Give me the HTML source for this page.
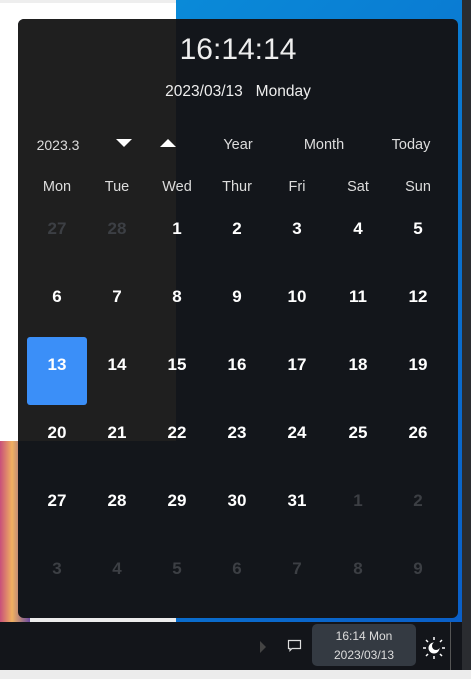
<!DOCTYPE html>
<html><head><meta charset="utf-8"><style>
body{margin:0;width:471px;height:679px;overflow:hidden;position:relative;background:#ececec;font-family:"Liberation Sans","DejaVu Sans",sans-serif}
.a{position:absolute}
.panel{left:18px;top:19px;width:440px;height:599px;border-radius:6px;overflow:hidden;background:#13161b}
.t{position:absolute;color:#fff;text-align:center;transform:translate(-50%,-50%);white-space:nowrap}
.d{font-weight:bold;font-size:17px}
.g{color:#3c3f44}
</style></head><body>
<div class="a" style="left:0;top:0;width:176px;height:441px;background:#fff"></div>
<div class="a" style="left:0;top:0;width:176px;height:3px;background:#eee"></div>
<div class="a" style="left:0;top:441px;width:30px;height:181px;background:linear-gradient(90deg,#c8507a,#f0b060 40%,#6a4aa0)"></div>
<div class="a" style="left:176px;top:0;width:286px;height:622px;background:linear-gradient(135deg,#0a8ad8,#0a5fc8)"></div>
<div class="a" style="left:462px;top:0;width:9px;height:670px;background:#2a2c30"></div>
<div class="a panel">
 <div class="a" style="left:0;top:0;width:158px;height:422px;background:#1f1f1f"></div>
</div>
<div class="a" style="left:0;top:622px;width:462px;height:48px;background:#13151a"></div>
<div class="a" style="left:312px;top:624px;width:104px;height:42px;border-radius:5px;background:#343a42"></div>
<div class="t" style="left:364px;top:636px;font-size:12px;color:#ddd">16:14 Mon</div>
<div class="t" style="left:364px;top:655px;font-size:12px;color:#ddd">2023/03/13</div>
<div class="a" style="left:260px;top:641px;width:0;height:0;border-left:6px solid #444;border-top:6px solid transparent;border-bottom:6px solid transparent"></div>
<svg class="a" style="left:287px;top:639px" width="16" height="14"><path d="M1.5 1.5h12v8H5l-2 2v-2H1.5z" fill="none" stroke="#ddd" stroke-width="1.2"/></svg>
<svg class="a" style="left:422px;top:636px" width="24" height="24"><circle cx="12" cy="12" r="5.5" fill="#fff"/><circle cx="14" cy="10" r="4" fill="#13151a"/><g stroke="#fff" stroke-width="1.5"><path d="M12 1v3M12 20v3M1 12h3M20 12h3M4 4l2 2M18 18l2 2M4 20l2-2M18 6l2-2"/></g></svg>
<div class="a" style="left:450px;top:622px;width:1px;height:48px;background:#555"></div>

<div class="t" style="left:238px;top:50px;font-size:30px;color:#eee">16:14:14</div>
<div class="t" style="left:238px;top:92px;font-size:15.5px;color:#eee">2023/03/13&nbsp;&nbsp;&nbsp;Monday</div>
<div class="t" style="left:58px;top:145px;font-size:14px;color:#ddd">2023.3</div>
<div class="a" style="left:116px;top:139px;border-top:8px solid #fff;border-left:8px solid transparent;border-right:8px solid transparent"></div>
<div class="a" style="left:160px;top:139px;border-bottom:8px solid #fff;border-left:8px solid transparent;border-right:8px solid transparent"></div>
<div class="t" style="left:238px;top:145px;font-size:14.5px;color:#ddd">Year</div>
<div class="t" style="left:324px;top:145px;font-size:14.5px;color:#ddd">Month</div>
<div class="t" style="left:411px;top:145px;font-size:14.5px;color:#ddd">Today</div>
<div class="a" style="left:27px;top:337px;width:60px;height:68px;background:#3b8ff8;border-radius:3px"></div>
<div id="c"></div>
<script>
var xs=[57,117,177,237,297,358,418],h=["Mon","Tue","Wed","Thur","Fri","Sat","Sun"],s="";
h.forEach(function(t,i){s+='<div class="t" style="left:'+xs[i]+'px;top:187px;font-size:14.5px;color:#ddd">'+t+'</div>'});
var days=[27,28];for(var i=1;i<=31;i++)days.push(i);for(i=1;i<=9;i++)days.push(i);
days.forEach(function(d,k){var r=Math.floor(k/7),c=k%7,g=(k<2||k>32);
s+='<div class="t d'+(g?' g':'')+'" style="left:'+xs[c]+'px;top:'+(229+r*68)+'px">'+d+'</div>'});
document.getElementById("c").innerHTML=s;
</script>
</body></html>
